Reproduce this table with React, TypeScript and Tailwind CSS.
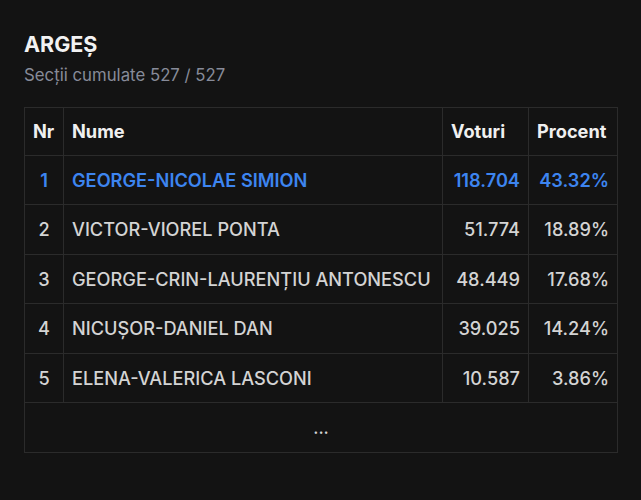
import React from "react";

const rows = [
  { nr: 1, name: "GEORGE-NICOLAE SIMION", votes: "118.704", pct: "43.32%", hi: true },
  { nr: 2, name: "VICTOR-VIOREL PONTA", votes: "51.774", pct: "18.89%" },
  { nr: 3, name: "GEORGE-CRIN-LAURENȚIU ANTONESCU", votes: "48.449", pct: "17.68%" },
  { nr: 4, name: "NICUȘOR-DANIEL DAN", votes: "39.025", pct: "14.24%" },
  { nr: 5, name: "ELENA-VALERICA LASCONI", votes: "10.587", pct: "3.86%" },
];

export default function App() {
  return (
    <div
      className="w-[641px] h-[500px] bg-[#131313] px-6 pt-[30px] text-[#d6d6d6]"
      style={{ fontFamily: "Inter, 'Noto Sans', sans-serif" }}
    >
      <h1 className="text-[21.5px] leading-[28px] font-bold text-[#f2f2f2]">ARGEȘ</h1>
      <p className="mt-[5px] text-[16.8px] leading-[24px] text-[#878b99]">Secții cumulate 527 / 527</p>
      <table className="mt-[20px] w-[594px] table-fixed border-collapse text-[18.2px] leading-[24.5px]">
        <colgroup>
          <col className="w-[39px]" />
          <col className="w-[379px]" />
          <col className="w-[86px]" />
          <col className="w-[89px]" />
        </colgroup>
        <thead>
          <tr className="font-semibold text-[#f0f0f0]">
            <th className="border border-[#2b2b2b] px-[8px] py-[11px] text-left">Nr</th>
            <th className="border border-[#2b2b2b] px-[8px] py-[11px] text-left">Nume</th>
            <th className="border border-[#2b2b2b] px-[8px] py-[11px] text-left">Voturi</th>
            <th className="border border-[#2b2b2b] px-[8px] py-[11px] text-left">Procent</th>
          </tr>
        </thead>
        <tbody>
          {rows.map((r) => (
            <tr
              key={r.nr}
              className={r.hi ? "font-semibold text-[#3d85f0]" : "font-medium text-[#d4d4d4]"}
            >
              <td className="border border-[#2b2b2b] px-[8px] py-[12px] text-center">{r.nr}</td>
              <td className="border border-[#2b2b2b] px-[8px] py-[12px] whitespace-nowrap">{r.name}</td>
              <td className="border border-[#2b2b2b] px-[8px] py-[12px] text-right">{r.votes}</td>
              <td className="border border-[#2b2b2b] px-[8px] py-[12px] text-right">{r.pct}</td>
            </tr>
          ))}
          <tr>
            <td colSpan={4} className="border border-[#2b2b2b] py-[12px] text-center text-[#d4d4d4]">
              ...
            </td>
          </tr>
        </tbody>
      </table>
    </div>
  );
}
